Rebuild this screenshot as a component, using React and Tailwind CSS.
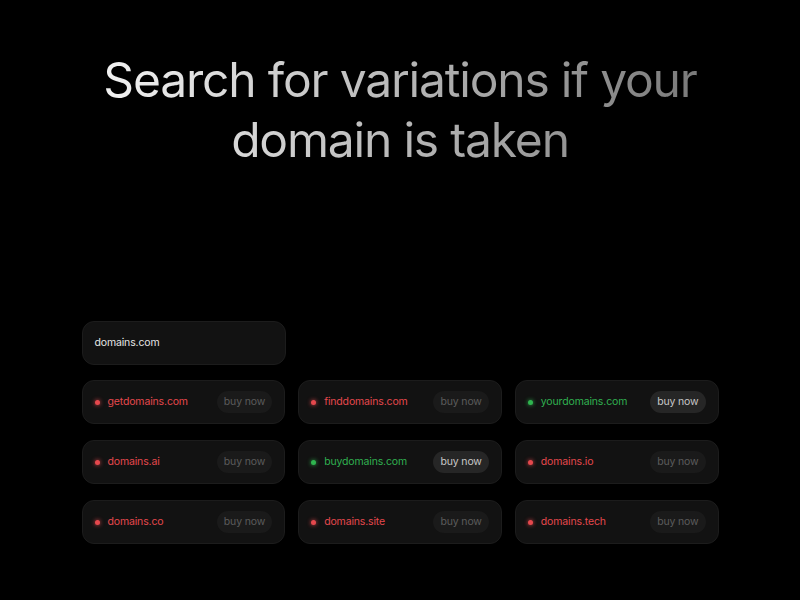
import React from "react";

const items = [
  { name: "getdomains.com", ok: false },
  { name: "finddomains.com", ok: false },
  { name: "yourdomains.com", ok: true },
  { name: "domains.ai", ok: false },
  { name: "buydomains.com", ok: true },
  { name: "domains.io", ok: false },
  { name: "domains.co", ok: false },
  { name: "domains.site", ok: false },
  { name: "domains.tech", ok: false },
];

function Card({ name, ok }) {
  return (
    <div className="h-[44px] rounded-[12px] bg-[#121212] border border-[#1c1c1c] flex items-center justify-between pl-[12px] pr-[12px]">
      <div className="flex items-center gap-[8px]">
        <span
          className={
            ok
              ? "w-[5px] h-[5px] rounded-full bg-[#2fb54f] shadow-[0_0_4px_#2fb54f]"
              : "w-[5px] h-[5px] rounded-full bg-[#e5484d] shadow-[0_0_4px_#e5484d]"
          }
        />
        <span className={ok ? "text-[10.5px] tracking-[-0.15px] text-[#30b050]" : "text-[10.5px] tracking-[-0.15px] text-[#e5484d]"}>{name}</span>
      </div>
      <span
        className={
          ok
            ? "h-[22px] px-[7px] rounded-full bg-[#262626] text-[10.5px] tracking-[-0.15px] text-[#c8c8c8] flex items-center"
            : "h-[22px] px-[7px] rounded-full bg-[#1a1a1a] text-[10.5px] tracking-[-0.15px] text-[#5c5c5c] flex items-center"
        }
      >
        buy now
      </span>
    </div>
  );
}

export default function App() {
  return (
    <div className="w-[800px] h-[600px] bg-black flex flex-col items-center" style={{ fontFamily: "Inter, 'Noto Sans', sans-serif" }}>
      <h1 className="mt-[50px] text-center text-[48px] leading-[60px] tracking-[-1.2px] font-normal bg-gradient-to-r from-[#f2f2f2] via-[#b8b8b8] to-[#7a7a7a] bg-clip-text text-transparent">
        Search for variations if your
        <br />
        domain is taken
      </h1>
      <div className="mt-[151px] w-[637px]">
        <div className="w-[204px] h-[44px] rounded-[12px] bg-[#121212] border border-[#1c1c1c] flex items-center pl-[12px] text-[10.5px] tracking-[-0.15px] text-[#e6e6e6]">
          domains.com
        </div>
        <div className="mt-[15px] grid grid-cols-3 gap-x-[13px] gap-y-[16px]">
          {items.map((it) => (
            <Card key={it.name} {...it} />
          ))}
        </div>
      </div>
    </div>
  );
}
